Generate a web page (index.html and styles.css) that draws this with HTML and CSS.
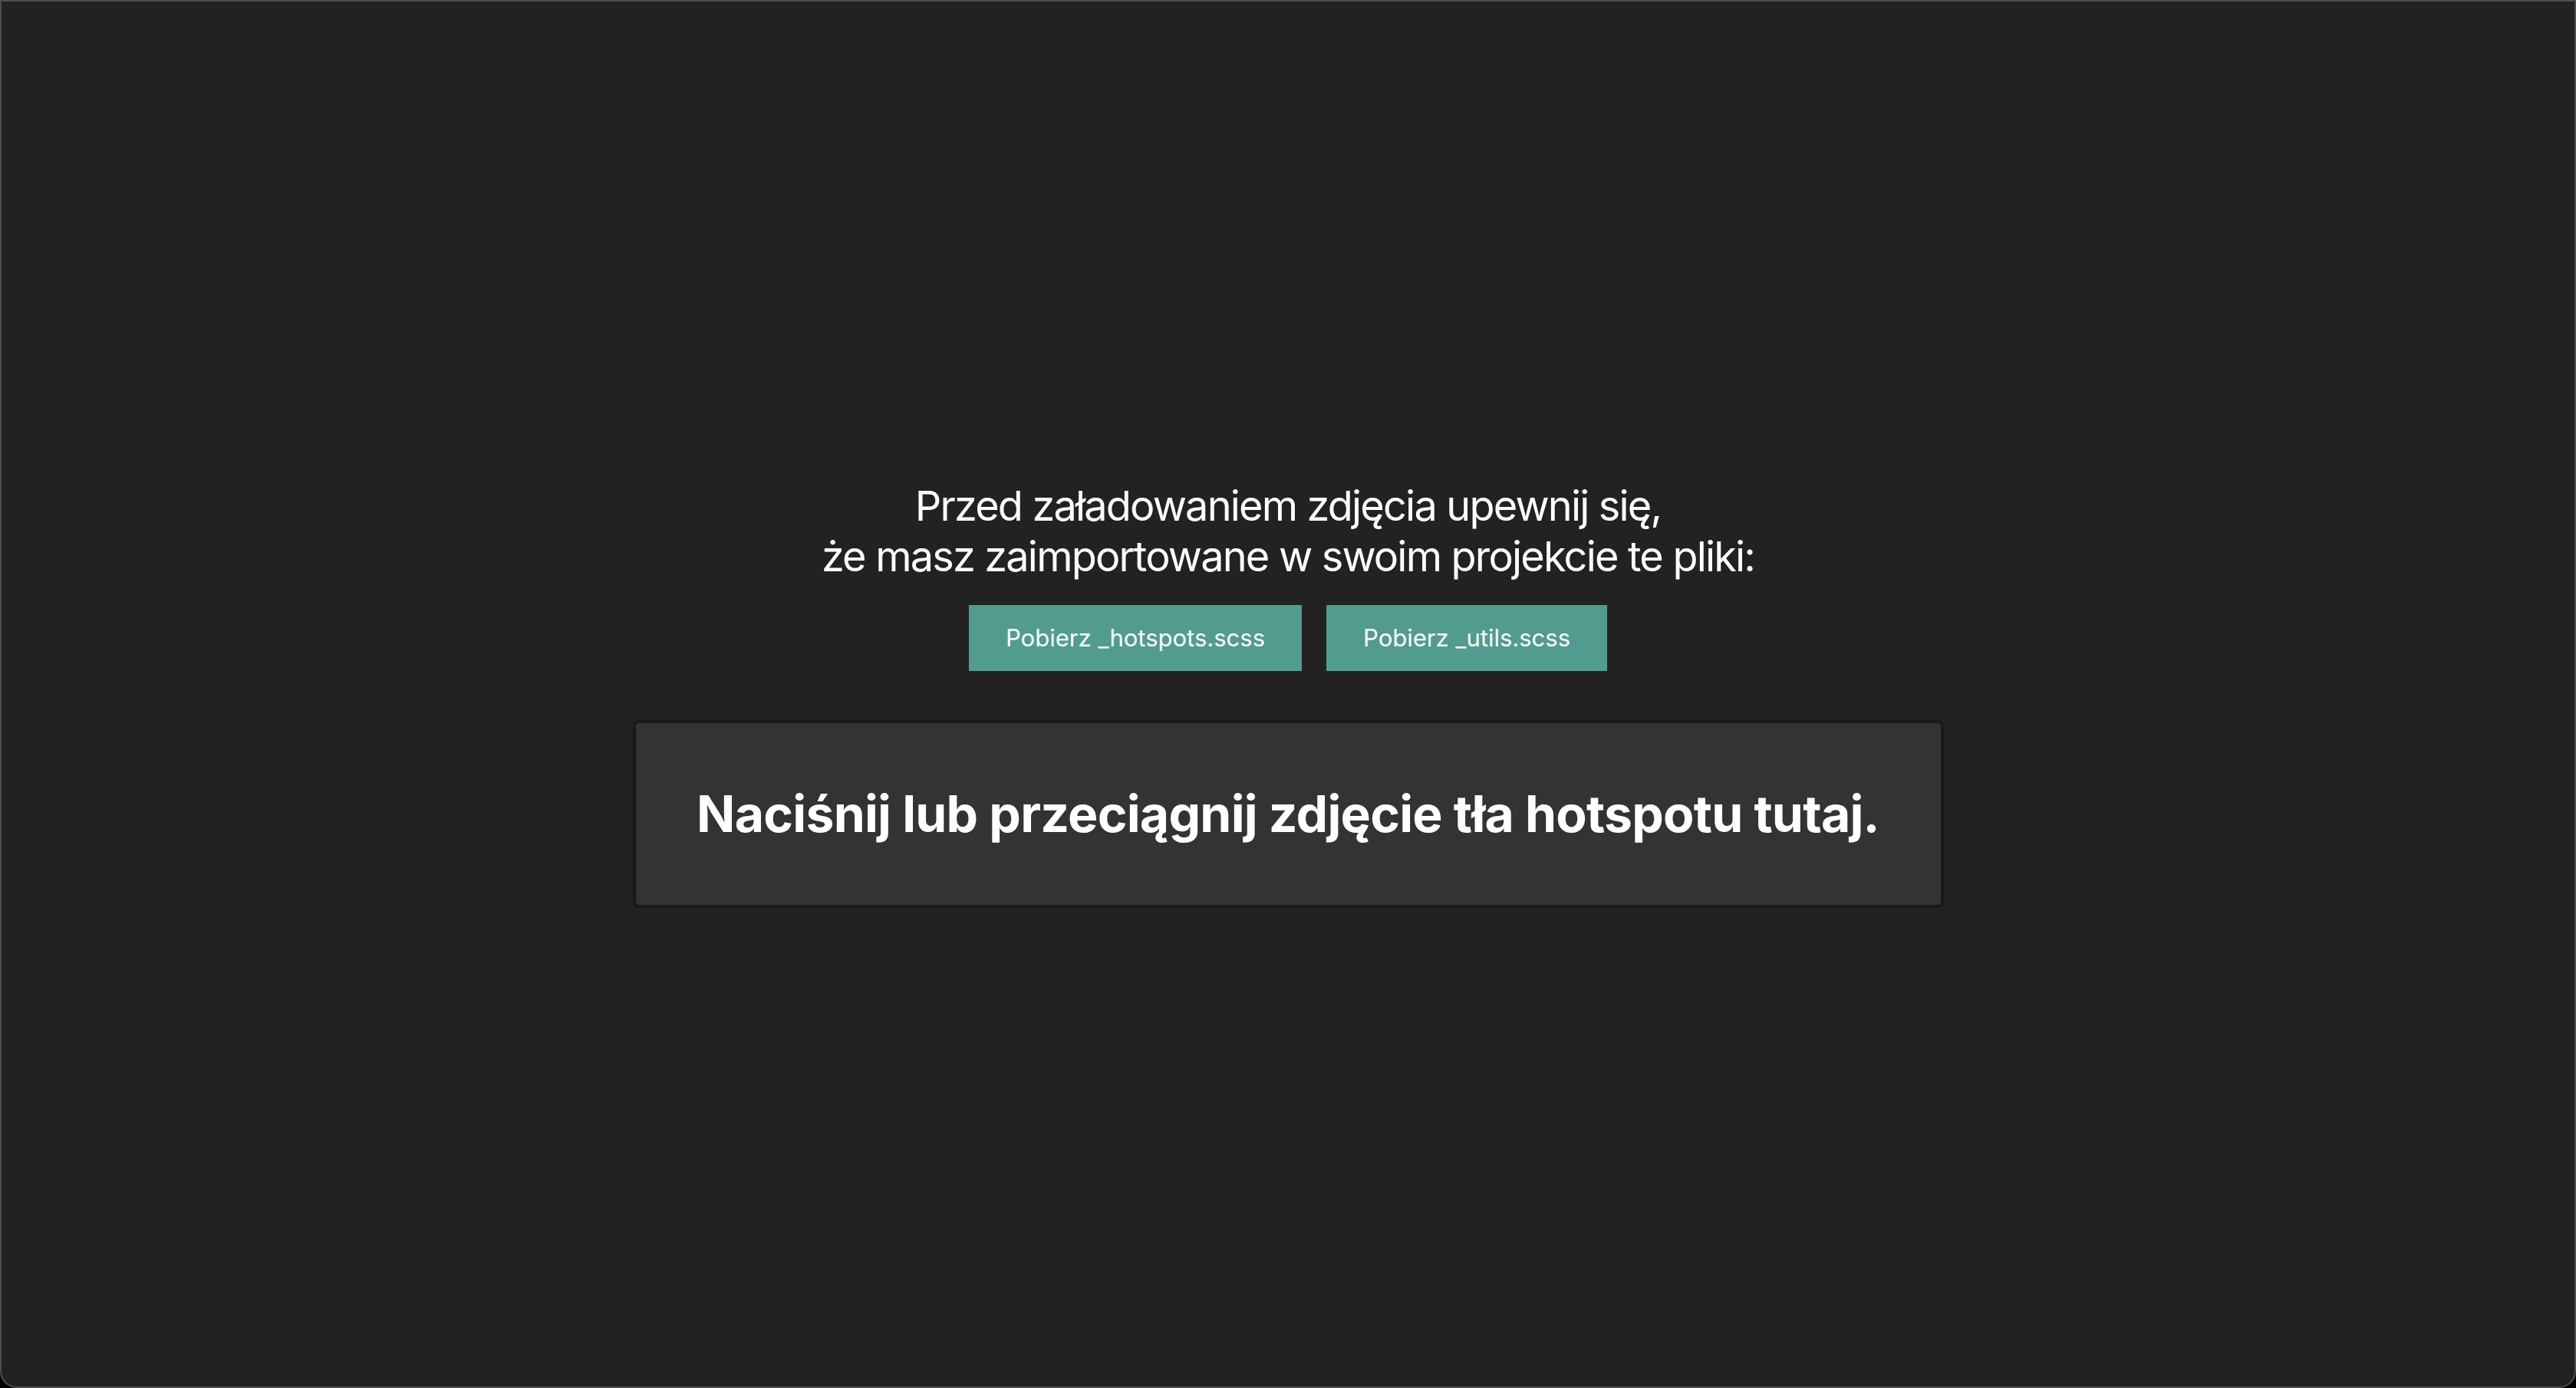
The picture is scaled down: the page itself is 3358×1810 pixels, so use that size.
FILE: index.html
```html
<!DOCTYPE html>
<html lang="pl">
<head>
<meta charset="utf-8">
<title>Hotspoty</title>
<link rel="stylesheet" href="styles.css">
</head>
<body>
<div class="window">
  <main class="content">
    <p class="intro">Przed załadowaniem zdjęcia upewnij się,<br>że masz zaimportowane w swoim projekcie te pliki:</p>
    <div class="actions">
      <a class="button" href="#">Pobierz _hotspots.scss</a>
      <a class="button" href="#">Pobierz _utils.scss</a>
    </div>
    <div class="dropzone">
      <h2 class="dropzone-title">Naciśnij lub przeciągnij zdjęcie tła hotspotu tutaj.</h2>
    </div>
  </main>
</div>
</body>
</html>
```

FILE: styles.css
```css
* { box-sizing: border-box; }

html, body {
  margin: 0;
  padding: 0;
  height: 100%;
  background: #000;
}

body {
  font-family: Inter, "Noto Sans", "Liberation Sans", sans-serif;
  color: #fff;
}

.window {
  height: 100vh;
  background: #222222;
  border: 2px solid #4d4d4d;
  border-radius: 0 0 22px 22px;
  display: flex;
  align-items: center;
  justify-content: center;
}

.content {
  display: flex;
  flex-direction: column;
  align-items: center;
}

.intro {
  margin: 0;
  font-size: 54px;
  line-height: 66px;
  font-weight: 400;
  letter-spacing: -1.8px;
  text-align: center;
}

.actions {
  display: flex;
  gap: 32px;
  margin-top: 30px;
}

.button {
  display: flex;
  align-items: center;
  height: 86px;
  padding: 0 48px;
  background: #519c8f;
  color: #fff;
  text-decoration: none;
  font-size: 31px;
}

.dropzone {
  margin-top: 64px;
  width: 1709px;
  height: 245px;
  background: #333333;
  border: 4px solid #191919;
  border-radius: 8px;
  display: flex;
  align-items: center;
  justify-content: center;
}

.dropzone-title {
  margin: 0;
  font-size: 66px;
  font-weight: 700;
  letter-spacing: -0.75px;
}
```
